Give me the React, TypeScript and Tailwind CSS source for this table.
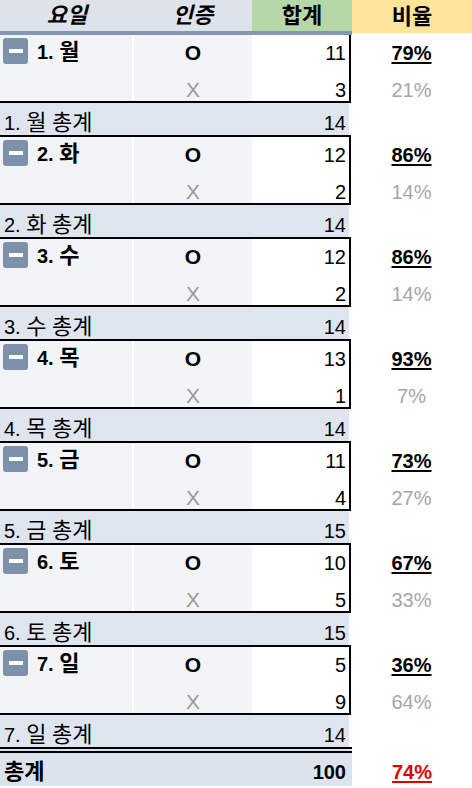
type Day = {
  num: string;
  day: string;
  o: number;
  x: number;
  op: string;
  xp: string;
  total: number;
};

const days: Day[] = [
  { num: "1.", day: "월", o: 11, x: 3, op: "79%", xp: "21%", total: 14 },
  { num: "2.", day: "화", o: 12, x: 2, op: "86%", xp: "14%", total: 14 },
  { num: "3.", day: "수", o: 12, x: 2, op: "86%", xp: "14%", total: 14 },
  { num: "4.", day: "목", o: 13, x: 1, op: "93%", xp: "7%", total: 14 },
  { num: "5.", day: "금", o: 11, x: 4, op: "73%", xp: "27%", total: 15 },
  { num: "6.", day: "토", o: 10, x: 5, op: "67%", xp: "33%", total: 15 },
  { num: "7.", day: "일", o: 5, x: 9, op: "36%", xp: "64%", total: 14 },
];

// Korean glyphs render a bit larger than the latin ones in the sheet
function K({ children }: { children: React.ReactNode }) {
  return <span className="text-[22px] leading-[20px]">{children}</span>;
}

function MinusBox() {
  return (
    <span className="mt-[3px] ml-[3px] w-[25px] h-[26px] rounded-[3px] bg-[#7d91ab] flex items-center justify-center shrink-0">
      <span className="w-[14px] h-[4px] bg-white" />
    </span>
  );
}

function Group({ d, first }: { d: Day; first: boolean }) {
  return (
    <>
      <div className="flex">
        <div className={`w-[351px] border-black border-r-2 border-b-2 ${first ? "" : "border-t-2"}`}>
          {/* O row */}
          <div className="flex h-[33px]">
            <div className="w-[134px] bg-[#f2f4f7] border-r-2 border-white flex items-start">
              <MinusBox />
              <span className="ml-[9px] mt-[7px] font-bold leading-[20px]">
                {d.num} <K>{d.day}</K>
              </span>
            </div>
            <div className="w-[118px] bg-[#f2f4f7] flex items-end justify-center pb-[5px] leading-[20px] font-bold text-[21px]">
              O
            </div>
            <div className="flex-1 bg-white flex items-end justify-end pr-[3px] pb-[5px] leading-[20px]">
              {d.o}
            </div>
          </div>
          {/* X row */}
          <div className="flex h-[33px]">
            <div className="w-[134px] bg-[#f2f4f7] border-r-2 border-white" />
            <div className="w-[118px] bg-[#f2f4f7] flex items-end justify-center pb-[1px] leading-[20px] text-[#9a9a9a] text-[21px]">
              X
            </div>
            <div className="flex-1 bg-white flex items-end justify-end pr-[3px] pb-[1px] leading-[20px]">
              {d.x}
            </div>
          </div>
        </div>
        <div className={`flex-1 flex flex-col ${first ? "" : "pt-[2px]"}`}>
          <div className="h-[33px] flex items-end justify-center pb-[5px] leading-[20px] font-bold underline decoration-2 underline-offset-2">
            {d.op}
          </div>
          <div className="h-[33px] flex items-end justify-center pb-[1px] leading-[20px] text-[#a6a6a6]">
            {d.xp}
          </div>
        </div>
      </div>
      {/* subtotal */}
      <div className="flex h-[32px]">
        <div className="w-[349px] bg-[#dfe5ee] flex items-end justify-between px-[4px] pb-[2px] leading-[20px]">
          <span>
            {d.num} <K>{d.day}</K> <K>총계</K>
          </span>
          <span className="mr-[-1px]">{d.total}</span>
        </div>
      </div>
    </>
  );
}

export default function App() {
  return (
    <div className="w-[472px] h-[788px] bg-white text-black text-[20px] overflow-hidden font-['Liberation_Sans','Noto_Sans_CJK_KR',sans-serif]">
      {/* header */}
      <div className="flex h-[35px]">
        <div className="w-[352px] flex border-b-4 border-[#8497b0]">
          <div className="w-[134px] bg-[#dee3eb] flex items-center justify-center font-bold italic text-[22px]">요일</div>
          <div className="w-[118px] bg-[#dee3eb] flex items-center justify-center font-bold italic text-[22px]">인증</div>
          <div className="flex-1 bg-[#b6d7a8] flex items-center justify-center font-bold text-[22px]">합계</div>
        </div>
        <div className="flex-1 h-[33px] bg-[#ffe599] flex items-center justify-center font-bold text-[22px]">비율</div>
      </div>

      {days.map((d, i) => (
        <Group key={d.num} d={d} first={i === 0} />
      ))}

      {/* grand total */}
      <div className="flex">
        <div className="w-[352px] border-t-[6px] border-double border-black h-[39px] bg-[#dde3ec] flex items-end justify-between px-[4px] pb-[4px] leading-[20px] font-bold">
          <K>총계</K>
          <span className="mr-[2px]">100</span>
        </div>
        <div className="flex-1 flex items-end justify-center pb-[4px] leading-[20px] font-bold text-[#e00000] underline decoration-2 underline-offset-2">
          74%
        </div>
      </div>
    </div>
  );
}
